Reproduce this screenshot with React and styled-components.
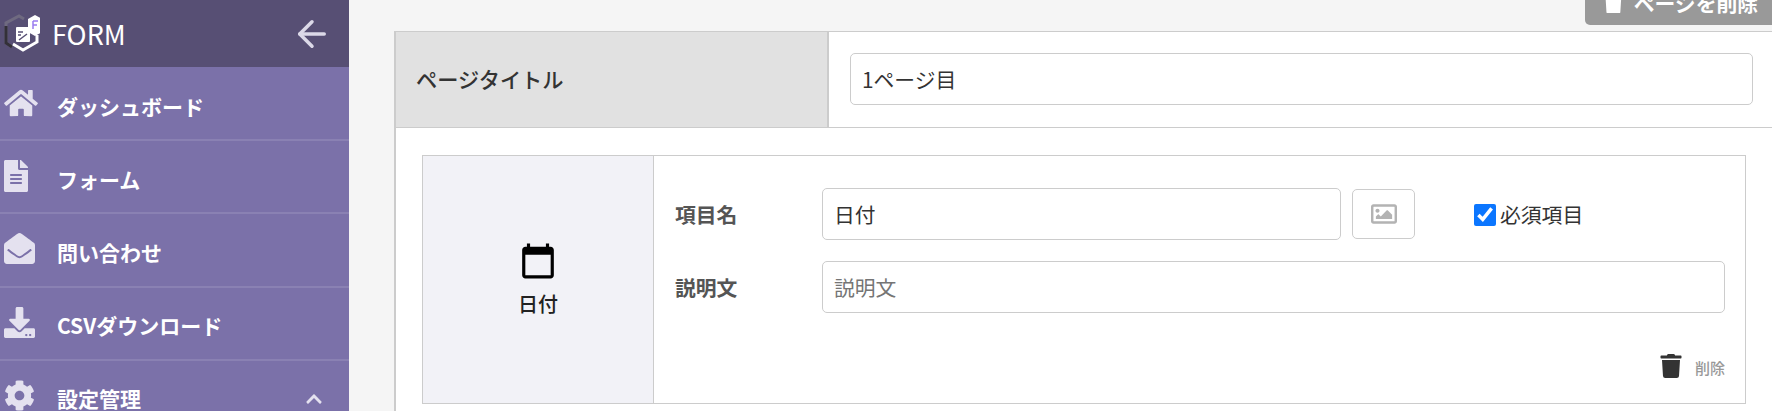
import styled, { createGlobalStyle } from "styled-components";
import { FaHome, FaFileAlt, FaEnvelopeOpen, FaDownload, FaCog, FaChevronUp, FaTrash, FaRegImage } from "react-icons/fa";
import { MdCalendarToday } from "react-icons/md";
import { FiArrowLeft } from "react-icons/fi";

const GlobalStyle = createGlobalStyle`
  html, body {
    margin: 0;
    padding: 0;
    height: 100%;
    overflow: hidden;
  }
  body {
    font-family: "Noto Sans CJK JP", "Noto Sans", sans-serif;
    color: #333333;
    background: #f5f5f5;
  }
  * {
    box-sizing: border-box;
  }
`;

const Layout = styled.div`
  display: flex;
  width: 1772px;
  height: 411px;
  overflow: hidden;
`;

const Sidebar = styled.aside`
  width: 349px;
  flex-shrink: 0;
  background: #7b71a9;
  overflow: hidden;
`;

const SideHeader = styled.header`
  height: 67px;
  margin-bottom: 1px;
  background: #574f74;
  display: flex;
  align-items: center;
  padding: 0 16px 0 3px;
  color: #ffffff;
`;

const LogoMark = styled.svg`
  width: 37px;
  height: 42px;
  flex-shrink: 0;
`;

const Brand = styled.span`
  font-size: 27px;
  margin-left: 12px;
  flex: 1;
  line-height: 1;
`;

const BackArrow = styled(FiArrowLeft)`
  width: 42px;
  height: 42px;
  color: #dcd9e8;
`;

const NavItem = styled.div`
  height: 73.2px;
  display: flex;
  align-items: center;
  padding: 4px 26px 0 4px;
  border-bottom: 2px solid #8a81b3;
  color: #ffffff;
  font-weight: 700;
  font-size: 21px;
`;

const NavIcon = styled.span`
  width: 53px;
  display: flex;
  flex-shrink: 0;
  margin-top: -6px;
  color: #e4e1ef;

  svg {
    display: block;
    width: ${(p) => p.$w}px;
    height: ${(p) => p.$h}px;
  }
`;

const NavLabel = styled.span`
  flex: 1;
`;

const Caret = styled(FaChevronUp)`
  color: #e4e1ef;
  font-size: 18px;
  margin-top: 2px;
`;

const Main = styled.main`
  flex: 1;
  min-width: 0;
  padding-left: 45px;
`;

const TopBar = styled.div`
  display: flex;
  justify-content: flex-end;
  height: 31px;
`;

const DeletePage = styled.button`
  width: 200px;
  height: 40px;
  flex-shrink: 0;
  margin-top: -15px;
  margin-right: -13px;
  padding: 0 0 4px 18px;
  border: none;
  border-radius: 5px;
  background: #999999;
  color: #ffffff;
  font-family: inherit;
  font-size: 20.8px;
  font-weight: 700;
  display: flex;
  align-items: center;
  gap: 10px;
`;

const Panel = styled.section`
  background: #ffffff;
  border-top: 1px solid #cccccc;
  border-left: 2px solid #cccccc;
  height: 400px;
`;

const TitleRow = styled.div`
  display: flex;
  height: 96px;
  border-bottom: 1px solid #cccccc;
`;

const TitleLabel = styled.div`
  width: 433px;
  background: #e1e1e1;
  border-right: 2px solid #cccccc;
  padding: 0 0 2px 20px;
  display: flex;
  align-items: center;
  font-size: 21.2px;
  font-weight: 500;
`;

const TitleField = styled.div`
  flex: 1;
  padding: 21px 19px 0 21px;
`;

const TextInput = styled.input`
  display: block;
  flex-shrink: ${(p) => (p.$width ? 0 : 1)};
  min-width: 0;
  width: ${(p) => p.$width || "100%"};
  height: 52px;
  padding: 0 11px;
  border: 1.5px solid #cccccc;
  border-radius: 5px;
  background: #ffffff;
  color: #333333;
  font-family: inherit;
  font-size: 20.8px;
  &::placeholder {
    color: #757575;
  }
`;

const CardWrap = styled.div`
  padding: 27px 26px 0 26px;
`;

const Card = styled.div`
  display: flex;
  height: 249px;
  border: 1px solid #cccccc;
`;

const TypeCell = styled.div`
  width: 231px;
  background: #f2f2f7;
  border-right: 1px solid #cccccc;
  display: flex;
  flex-direction: column;
  align-items: center;
  justify-content: center;
  gap: 9px;
  color: #222222;
  font-size: 20px;
  font-weight: 500;
`;

const CalendarIcon = styled(MdCalendarToday)`
  width: 38px;
  height: 38px;
  color: #000000;
`;

const FieldCell = styled.div`
  flex: 1;
  padding: 32px 20px 0 21px;
  display: flex;
  flex-direction: column;
`;

const FieldRow = styled.div`
  display: flex;
  align-items: center;
  margin-bottom: 21px;
`;

const FieldLabel = styled.label`
  width: 147px;
  flex-shrink: 0;
  font-size: 20.8px;
  font-weight: 700;
  color: #555555;
`;

const ImageButton = styled.button`
  width: 63px;
  height: 50px;
  margin-left: 11px;
  padding: 0;
  border: 1.5px solid #cccccc;
  border-radius: 5px;
  background: #ffffff;
  color: #b3b3b3;
  font-size: 26px;
  display: flex;
  align-items: center;
  justify-content: center;
`;

const Required = styled.label`
  margin-left: 59px;
  display: flex;
  align-items: center;
  gap: 4px;
  font-size: 20.8px;
`;

const CheckBox = styled.input`
  width: 22px;
  height: 22px;
  margin: 2px 0 0;
  accent-color: #0b76ff;
`;

const CardFooter = styled.div`
  display: flex;
  justify-content: flex-end;
  align-items: center;
  gap: 12px;
  margin-top: 23px;
  color: #999999;
  font-size: 15px;
  font-weight: 500;
`;

const TrashIcon = styled(FaTrash)`
  color: #333333;
  font-size: 24px;
  margin-top: -4px;
`;

const nav = [
  { label: "ダッシュボード", icon: <FaHome />, w: 34, h: 30 },
  { label: "フォーム", icon: <FaFileAlt />, w: 24, h: 32 },
  { label: "問い合わせ", icon: <FaEnvelopeOpen />, w: 31, h: 31 },
  { label: "CSVダウンロード", icon: <FaDownload />, w: 31, h: 31 },
  { label: "設定管理", icon: <FaCog />, w: 31, h: 31, open: true },
];

function Logo() {
  return (
    <LogoMark viewBox="0 0 37 42">
      <path d="M21 6 L16 3 L3 10 L3 30 L9 34" fill="none" stroke="#6f6a80" strokeWidth="3" />
      <path d="M3 13 L3 30 L9 34" fill="none" stroke="#333038" strokeWidth="3" />
      <path d="M10 31 L20 37 L34 29 L34 22" fill="none" stroke="#ffffff" strokeWidth="3" />
      <rect x="13" y="14" width="14" height="15" fill="#ffffff" rx="1" />
      <path d="M15 19h5M15 22h3M16 27l8-6" stroke="#574f74" strokeWidth="1.500" />
      <path d="M32 2 L39 6 L39 19 L32 23 L25 19 L25 6 Z" fill="#ffffff" />
      <path d="M30 8h5M30 8v8M30 12h4" stroke="#9b7cf0" strokeWidth="1.500" fill="none" />
    </LogoMark>
  );
}

export default function App() {
  return (
    <>
      <GlobalStyle />
      <Layout>
        <Sidebar>
          <SideHeader>
            <Logo />
            <Brand>FORM</Brand>
            <BackArrow />
          </SideHeader>
          {nav.map((item) => (
            <NavItem key={item.label}>
              <NavIcon $w={item.w} $h={item.h}>{item.icon}</NavIcon>
              <NavLabel>{item.label}</NavLabel>
              {item.open && <Caret />}
            </NavItem>
          ))}
        </Sidebar>
        <Main>
          <TopBar>
            <DeletePage>
              <FaTrash />
              ページを削除
            </DeletePage>
          </TopBar>
          <Panel>
            <TitleRow>
              <TitleLabel>ページタイトル</TitleLabel>
              <TitleField>
                <TextInput defaultValue="1ページ目" />
              </TitleField>
            </TitleRow>
            <CardWrap>
              <Card>
                <TypeCell>
                  <CalendarIcon />
                  日付
                </TypeCell>
                <FieldCell>
                  <FieldRow>
                    <FieldLabel>項目名</FieldLabel>
                    <TextInput $width="519px" defaultValue="日付" />
                    <ImageButton>
                      <FaRegImage />
                    </ImageButton>
                    <Required>
                      <CheckBox type="checkbox" defaultChecked />
                      必須項目
                    </Required>
                  </FieldRow>
                  <FieldRow>
                    <FieldLabel>説明文</FieldLabel>
                    <TextInput placeholder="説明文" />
                  </FieldRow>
                  <CardFooter>
                    <TrashIcon />
                    削除
                  </CardFooter>
                </FieldCell>
              </Card>
            </CardWrap>
          </Panel>
        </Main>
      </Layout>
    </>
  );
}
